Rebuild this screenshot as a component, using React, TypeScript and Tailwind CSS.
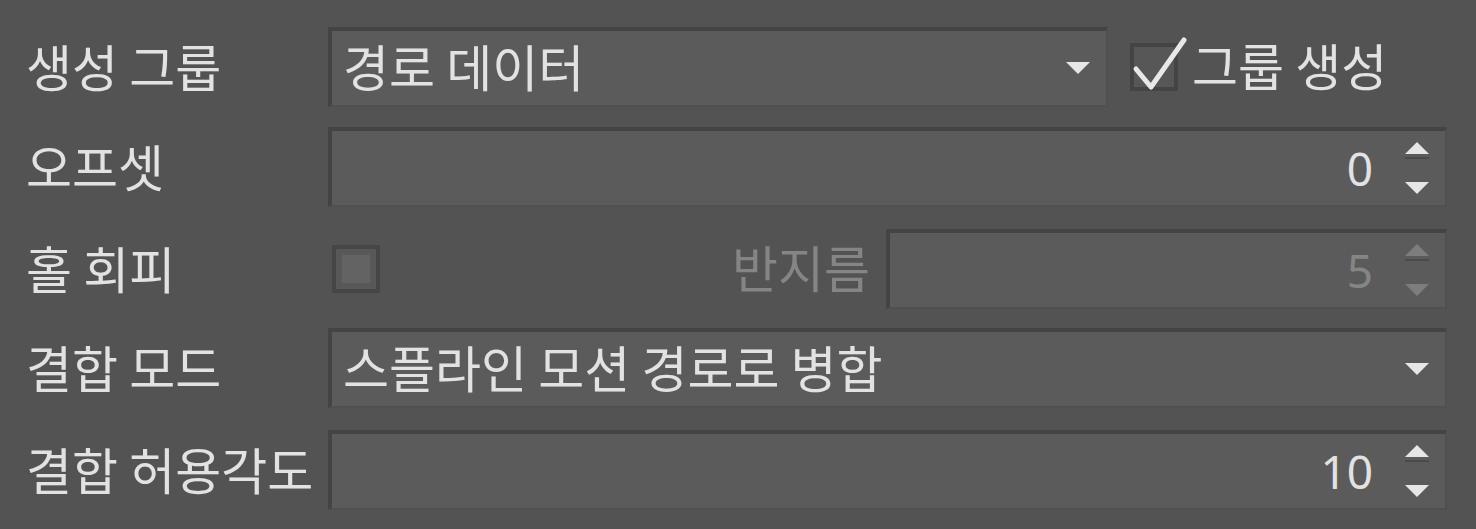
import React from "react";

const font = { fontFamily: '"Noto Sans CJK KR", "Noto Sans", sans-serif' };

function DownTri({ color = "#e6e6e6" }: { color?: string }) {
  return (
    <svg width="26" height="14" viewBox="0 0 26 14" className="block">
      <path d="M1 1 L25 1 L13 13 Z" fill={color} />
    </svg>
  );
}
function UpTri({ color = "#e6e6e6" }: { color?: string }) {
  return (
    <svg width="26" height="14" viewBox="0 0 26 14" className="block">
      <path d="M1 13 L25 13 L13 1 Z" fill={color} />
    </svg>
  );
}

function Combo({ text, className = "" }: { text: string; className?: string }) {
  return (
    <div
      className={`h-[80px] flex items-center bg-[#5b5b5b] border-t-4 border-l-4 border-[#444444] border-r-2 border-b-2 pl-[11px] pr-[15px] ${className}`}
      style={{ borderRightColor: "#505050", borderBottomColor: "#505050" }}
    >
      <span className="flex-1 text-[50px] leading-none text-[#e2e2e2] pb-[6px]">{text}</span>
      <DownTri />
    </div>
  );
}

function Spin({ value, disabled = false, className = "" }: { value: string; disabled?: boolean; className?: string }) {
  const c = disabled ? "#7d7d7d" : "#e6e6e6";
  return (
    <div
      className={`h-[80px] flex items-center bg-[#5b5b5b] border-t-4 border-l-4 border-[#444444] border-r-2 border-b-2 pr-[15px] ${className}`}
      style={{ borderRightColor: "#505050", borderBottomColor: "#505050" }}
    >
      <span
        className={`flex-1 text-right text-[46px] leading-none ${disabled ? "text-[#858585]" : "text-[#e2e2e2]"}`}
        style={{ fontFamily: '"Noto Sans", "Noto Sans CJK KR", sans-serif' }}
      >
        {value}
      </span>
      <div className="ml-[31px] flex flex-col items-center">
        <UpTri color={c} />
        <div className="h-[2px] w-[24px] bg-[#4a4a4a] mt-[2px]" />
        <div className="h-[22px]" />
        <DownTri color={c} />
      </div>
    </div>
  );
}

function Label({ text }: { text: string }) {
  return <div className="w-[302px] shrink-0 text-[50px] leading-none text-[#e2e2e2] pb-[4px]">{text}</div>;
}

export default function App() {
  return (
    <div className="w-[1476px] h-[529px] bg-[#535353] pl-[26px] pr-[29px] pt-[27px] overflow-hidden" style={font}>
      {/* Row 1 */}
      <div className="flex items-center h-[80px]">
        <Label text="생성 그룹" />
        <Combo text="경로 데이터" className="w-[780px] shrink-0" />
        <div className="relative ml-[22px] w-[48px] h-[48px] border-4 border-[#444444] bg-[#575757] shrink-0">
          <svg className="absolute" style={{ left: -2, top: -12 }} width="58" height="60" viewBox="0 0 58 60">
            <path d="M4 34 L19 52 L52 5" fill="none" stroke="#e8e8e8" strokeWidth="5" strokeLinecap="round" strokeLinejoin="round" />
          </svg>
        </div>
        <span className="ml-[14px] text-[50px] leading-none text-[#e2e2e2] pb-[6px]">그룹 생성</span>
      </div>

      {/* Row 2 */}
      <div className="flex items-center h-[81px] mt-[19px]">
        <Label text="오프셋" />
        <Spin value="0" className="flex-1" />
      </div>

      {/* Row 3 */}
      <div className="flex items-center h-[80px] mt-[22px]">
        <Label text="홀 회피" />
        <div className="ml-[4px] w-[48px] h-[48px] border-4 border-[#464646] bg-[#585858] flex items-center justify-center shrink-0">
          <div className="w-[28px] h-[28px] bg-[#636363]" />
        </div>
        <div className="flex-1" />
        <span className="text-[50px] leading-none text-[#858585] pb-[6px] mr-[16px]">반지름</span>
        <Spin value="5" disabled className="w-[561px] shrink-0" />
      </div>

      {/* Row 4 */}
      <div className="flex items-center h-[80px] mt-[19px]">
        <Label text="결합 모드" />
        <Combo text="스플라인 모션 경로로 병합" className="flex-1" />
      </div>

      {/* Row 5 */}
      <div className="flex items-center h-[80px] mt-[22px]">
        <Label text="결합 허용각도" />
        <Spin value="10" className="flex-1" />
      </div>
    </div>
  );
}
